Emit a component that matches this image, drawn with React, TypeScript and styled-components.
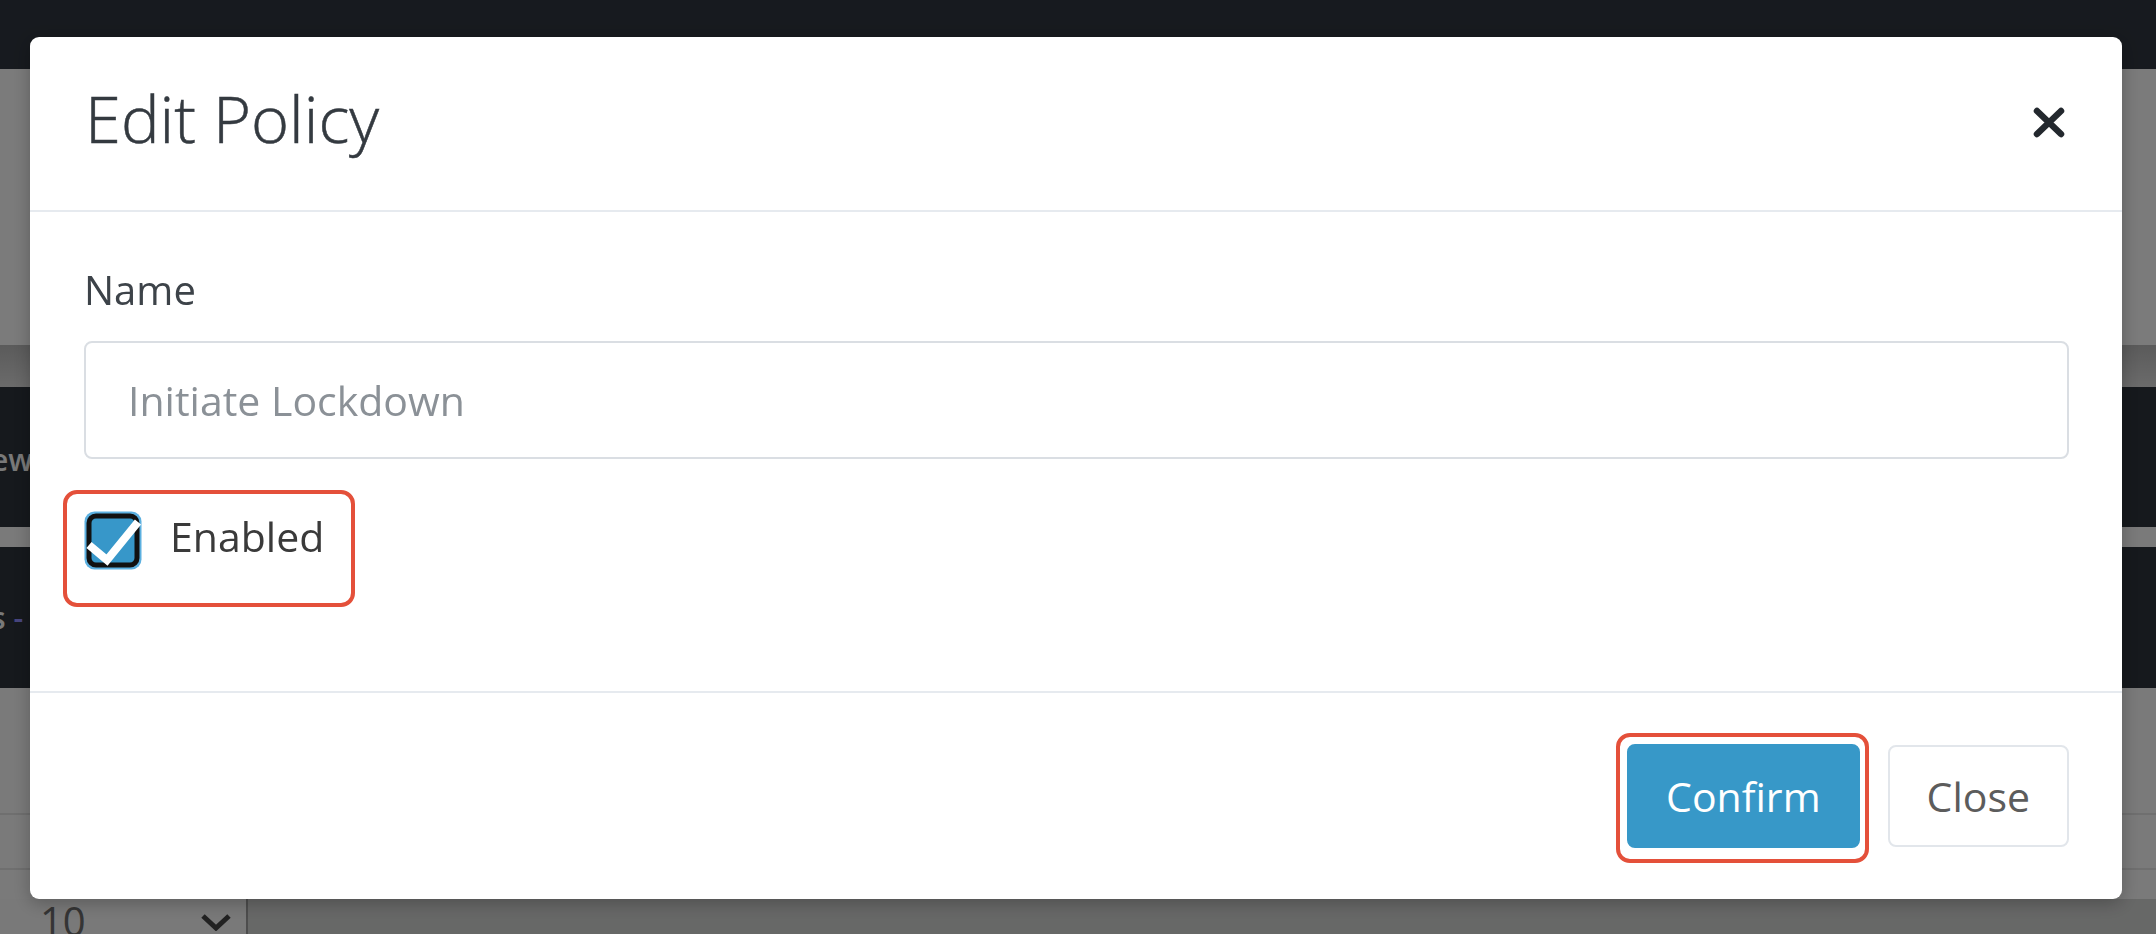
import React from 'react';
import styled, { createGlobalStyle } from 'styled-components';

const GlobalStyle = createGlobalStyle`
  * { box-sizing: border-box; }
  html, body { margin: 0; padding: 0; }
  body {
    font-family: "Open Sans", "Noto Sans", "Liberation Sans", sans-serif;
    background: #f5f5f5;
    overflow: hidden;
  }
`;

/* ---------- page behind the dialog ---------- */

const Page = styled.div`
  width: 2156px;
  height: 934px;
  display: flex;
  flex-direction: column;
  background: #f5f5f5;
`;

const NavBar = styled.div`
  height: 69px;
  background: #2f353e;
  flex-shrink: 0;
`;

const Hero = styled.div`
  height: 276px;
  background: #f6f6f6;
  flex-shrink: 0;
`;

const Band = styled.div`
  height: 42px;
  background: linear-gradient(#b6b6b6, #d6d6d6);
  flex-shrink: 0;
`;

const Panel = styled.div<{ $height: number; $pad: number }>`
  height: ${(p) => p.$height}px;
  padding-top: ${(p) => p.$pad}px;
  background: #2c323a;
  flex-shrink: 0;
  overflow: hidden;
`;

const PanelTitle = styled.div`
  margin-left: -9px;
  font-size: 30px;
  line-height: 1;
  font-weight: 600;
  color: #f2f2f2;
  white-space: nowrap;

  span {
    color: #8f8cff;
  }
`;

const Spacer = styled.div<{ $height: number }>`
  height: ${(p) => p.$height}px;
  flex-shrink: 0;
`;

const TableRow = styled.div<{ $height: number }>`
  height: ${(p) => p.$height}px;
  border-bottom: 2px solid #dedede;
  flex-shrink: 0;
`;

const Pager = styled.div`
  display: flex;
  height: 80px;
  background: #cfd0cf;
`;

const PageSelect = styled.div`
  width: 248px;
  display: flex;
  align-items: flex-start;
  justify-content: space-between;
  padding: 2px 14px 0 40px;
  background: #f2f2f2;
  border-right: 2px solid #9a9a9a;
  font-size: 40px;
  line-height: 1;
  color: #6a6a6a;

  svg {
    margin-top: 12px;
  }
`;

/* ---------- dialog ---------- */

const Backdrop = styled.div`
  position: fixed;
  inset: 0;
  background: rgba(0, 0, 0, 0.5);
  padding: 37px 34px 0 30px;
`;

const Modal = styled.div`
  background: #fff;
  border-radius: 9px;
  box-shadow: 0 4px 18px rgba(0, 0, 0, 0.25);
  display: flex;
  flex-direction: column;
`;

const Header = styled.div`
  display: flex;
  align-items: center;
  justify-content: space-between;
  padding: 42px 57px 52px 55px;
  border-bottom: 2px solid #e6eaef;
`;

const Title = styled.h4`
  margin: 0;
  font-size: 65px;
  line-height: 79px;
  font-weight: 300;
  color: #343a40;
  -webkit-text-stroke: 0.5px #343a40;
`;

const CloseIcon = styled.button`
  border: 0;
  background: none;
  padding: 0;
  margin-top: 8px;
  display: flex;
  cursor: pointer;
`;

const Body = styled.div`
  display: flex;
  flex-direction: column;
  align-items: flex-start;
  padding: 48px 53px 84px 54px;
`;

const Label = styled.label`
  font-size: 40px;
  line-height: 60px;
  color: #3d4349;
`;

const TextInput = styled.input`
  width: 100%;
  height: 118px;
  margin-top: 21px;
  padding: 0 42px;
  border: 2px solid #dadee3;
  border-radius: 8px;
  font-family: inherit;
  font-size: 41px;
  color: #333;
  outline: none;

  &::placeholder {
    color: #8b9197;
  }
`;

const Marked = styled.div<{ $mt?: number; $mx?: number; $p?: string }>`
  position: relative;
  margin-top: ${(p) => p.$mt ?? 0}px;
  margin-left: ${(p) => p.$mx ?? 0}px;
  padding: ${(p) => p.$p ?? '0'};
`;

const Ring = styled.span<{ $t: number; $r: number; $b: number; $l: number }>`
  position: absolute;
  top: ${(p) => -p.$t}px;
  right: ${(p) => -p.$r}px;
  bottom: ${(p) => -p.$b}px;
  left: ${(p) => -p.$l}px;
  border: 4px solid #e4503a;
  border-radius: 14px;
  pointer-events: none;
`;

const CheckRow = styled.label`
  display: flex;
  align-items: flex-start;
  gap: 27px;
  width: 252px;
  font-size: 41px;
  line-height: 1.2;
  color: #3a3a3a;
  cursor: pointer;

  span {
    margin-top: 2px;
  }
`;

const Footer = styled.div`
  display: flex;
  justify-content: flex-end;
  align-items: center;
  gap: 28px;
  padding: 51px 53px 51px;
  border-top: 2px solid #e6eaef;
`;

const Button = styled.button<{ $primary?: boolean }>`
  height: ${(p) => (p.$primary ? 104 : 102)}px;
  padding: 0 37px;
  border-radius: 8px;
  font-family: inherit;
  font-size: 41px;
  font-weight: 400;
  cursor: pointer;
  border: 2px solid ${(p) => (p.$primary ? '#3798c8' : '#e2e6eb')};
  background: ${(p) => (p.$primary ? '#3798c8' : '#fff')};
  color: ${(p) => (p.$primary ? '#fff' : '#5c5c5c')};
`;

const CheckIcon = () => (
  <svg width="60" height="61" viewBox="0 0 60 61">
    <rect x="1.5" y="1.5" width="57" height="58" rx="10" fill="#5cb0e0" />
    <rect x="6" y="6" width="48" height="49" rx="7" fill="#3797c9" stroke="#111" strokeWidth="5" />
    <path d="M6 35 L24 50 L55 12" fill="none" stroke="#fff" strokeWidth="8" />
  </svg>
);

const XIcon = () => (
  <svg width="32" height="31" viewBox="0 0 32 31">
    <path d="M4 4 L28 27 M28 4 L4 27" stroke="#23282e" strokeWidth="6.5" strokeLinecap="round" />
  </svg>
);

const Chevron = () => (
  <svg width="32" height="18" viewBox="0 0 32 18">
    <path d="M3 3 L16 15 L29 3" fill="none" stroke="#444" strokeWidth="5" />
  </svg>
);

export default function App() {
  return (
    <>
      <GlobalStyle />
      <Page>
        <NavBar />
        <Hero />
        <Band />
        <Panel $height={140} $pad={58}>
          <PanelTitle>ew</PanelTitle>
        </Panel>
        <Spacer $height={20} />
        <Panel $height={141} $pad={56}>
          <PanelTitle>
            s <span>-</span>
          </PanelTitle>
        </Panel>
        <TableRow $height={127} />
        <TableRow $height={55} />
        <Spacer $height={29} />
        <Pager>
          <PageSelect>
            10
            <Chevron />
          </PageSelect>
        </Pager>
      </Page>

      <Backdrop>
        <Modal>
          <Header>
            <Title>Edit Policy</Title>
            <CloseIcon aria-label="Close">
              <XIcon />
            </CloseIcon>
          </Header>
          <Body>
            <Label htmlFor="policy-name">Name</Label>
            <TextInput id="policy-name" placeholder="Initiate Lockdown" />
            <Marked $mt={31} $mx={-21} $p="20px 20px 36px 20px">
              <Ring $t={0} $r={0} $b={0} $l={0} />
              <CheckRow>
                <CheckIcon />
                <span>Enabled</span>
              </CheckRow>
            </Marked>
          </Body>
          <Footer>
            <Marked>
              <Ring $t={11} $r={9} $b={15} $l={11} />
              <Button $primary>Confirm</Button>
            </Marked>
            <Button>Close</Button>
          </Footer>
        </Modal>
      </Backdrop>
    </>
  );
}
